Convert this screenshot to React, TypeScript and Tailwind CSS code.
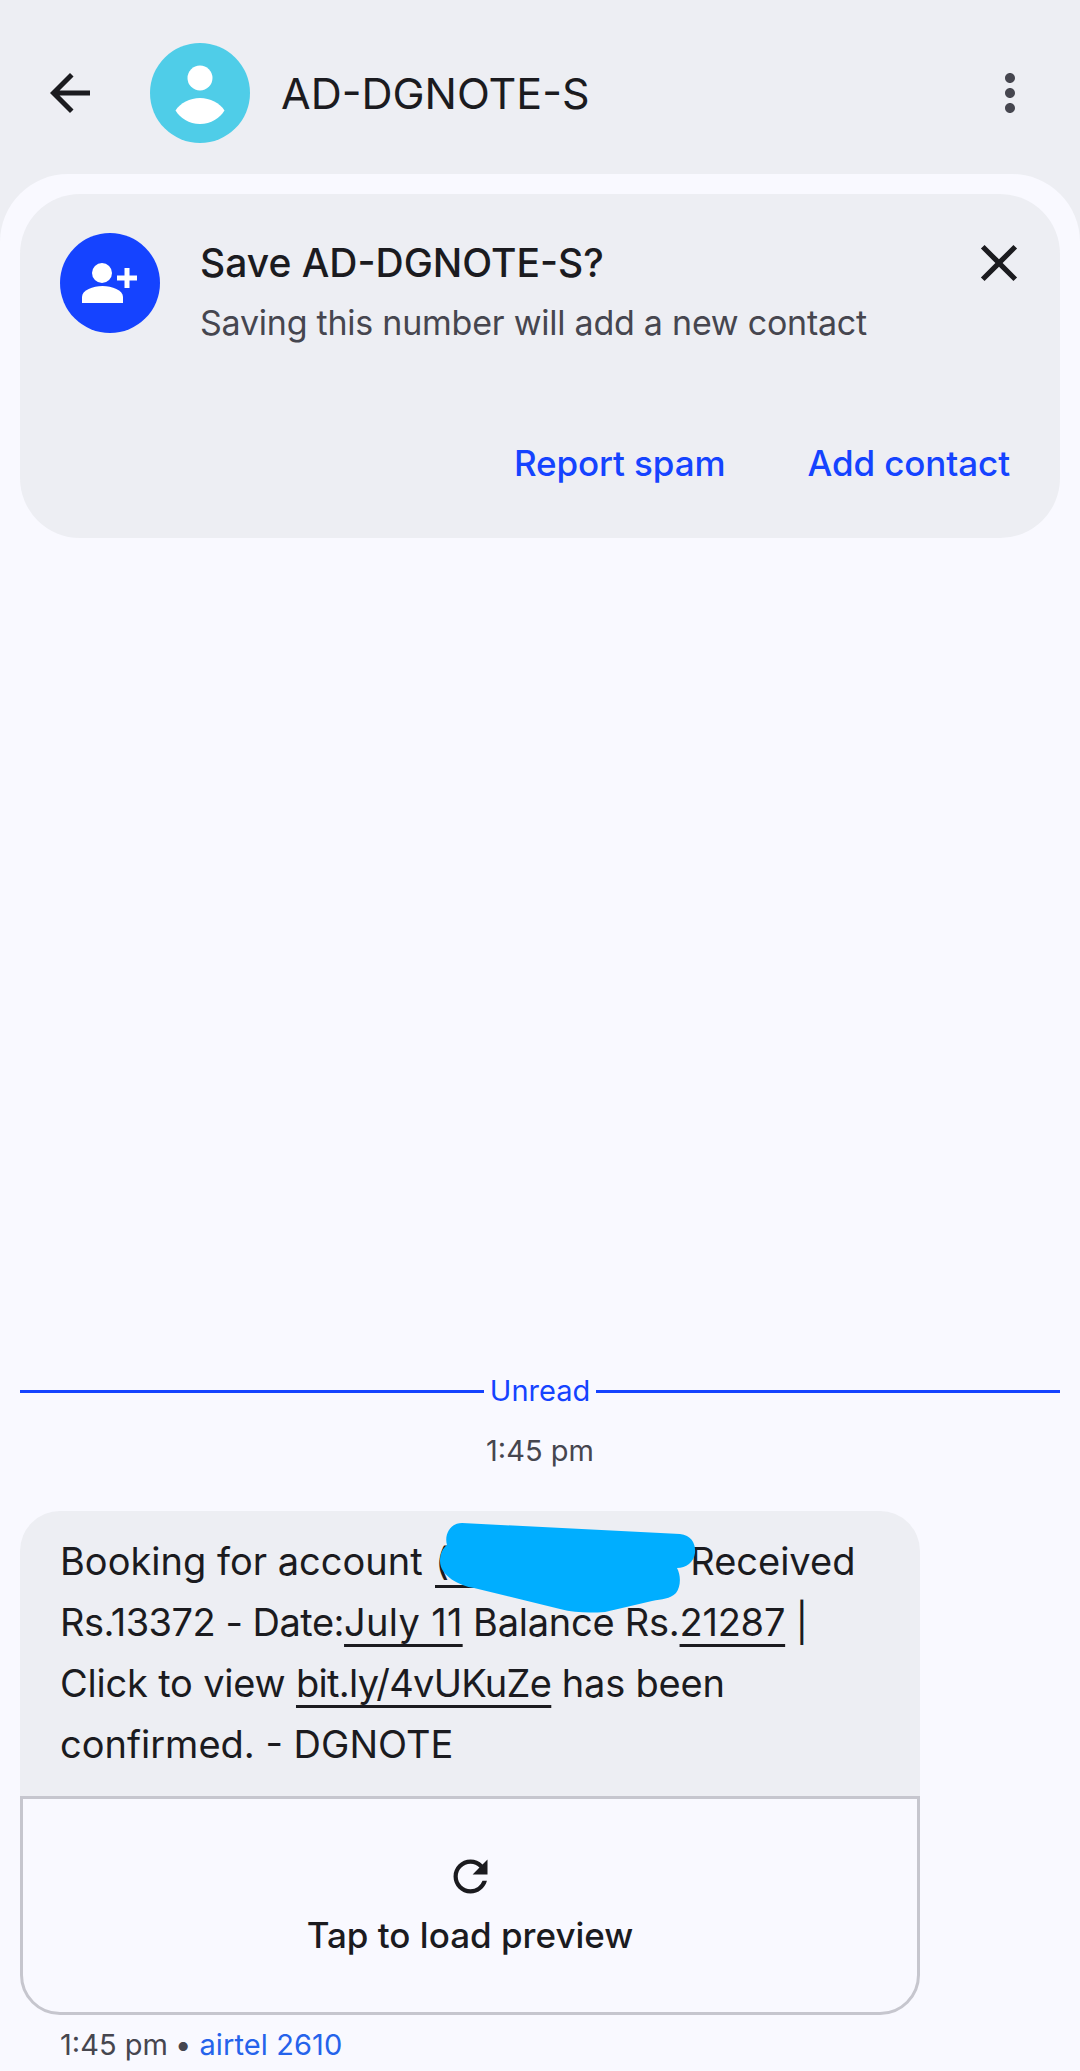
import { MdArrowBack, MdClose, MdMoreVert, MdRefresh } from 'react-icons/md';

function AvatarIcon() {
  return (
    <svg viewBox="0 0 100 100" className="w-[100px] h-[100px] shrink-0">
      <circle cx="50" cy="50" r="50" fill="#4fcde8" />
      <circle cx="50" cy="35" r="12.5" fill="#fff" />
      <path d="M25.5 67.5C30 60 40 55 50 55s20 5 24.5 12.5C70 75 61 81 50 81s-20-6-24.500-13.500z" fill="#fff" />
    </svg>
  );
}

function AddContactIcon() {
  return (
    <svg viewBox="0 0 100 100" className="w-[100px] h-[100px] shrink-0">
      <circle cx="50" cy="50" r="50" fill="#1543ff" />
      <circle cx="42" cy="40" r="10" fill="#fff" />
      <path d="M22 70v-6c0-7 11-11 20.500-11S63 57 63 64v6z" fill="#fff" />
      <path d="M57 42.500h7.500V35h5v7.500H77v5h-7.500V55h-5v-7.500H57z" fill="#fff" />
    </svg>
  );
}

function ScribbleMark() {
  return (
    <svg viewBox="0 0 270 100" className="absolute left-[410px] top-[10px] w-[270px] h-[100px]">
      <path
        d="M32 2 L250 13 C262 14 266 24 265 32 C264 41 256 47 247 47 C251 54 251 66 246 72 C240 78 232 78 222 80 L175 91 C160 92 145 92 130 88 L44 67 C30 65 10 55 10 40 C10 32 13 27 17 24 C14 14 20 2 32 2 Z"
        fill="#00aeff"
      />
    </svg>
  );
}

export default function App() {
  return (
    <div className="w-[1080px] h-[2071px] bg-[#edeef3] flex flex-col overflow-hidden font-['Inter','Liberation_Sans',sans-serif] text-[#1b1b1f]">
      <header className="h-[174px] shrink-0 flex items-start pt-[43px] pl-10 pr-10">
        <div className="h-[100px] flex items-center">
          <MdArrowBack size={60} />
        </div>
        <div className="ml-[50px]">
          <AvatarIcon />
        </div>
        <div className="ml-[31px] h-[100px] flex items-center text-[43px] tracking-[0px]">AD-DGNOTE-S</div>
        <div className="ml-auto h-[100px] flex items-center text-[#46464f]">
          <MdMoreVert size={60} />
        </div>
      </header>

      <main className="flex-1 bg-[#f9f9ff] rounded-t-[68px] px-5 pt-5 flex flex-col">
        <section className="bg-[#edeef3] rounded-[60px] h-[344px] pl-10 pr-10 pt-[39px] flex flex-col">
          <div className="flex items-start">
            <AddContactIcon />
            <div className="ml-10 flex-1">
              <div className="text-[39px] leading-[60px] font-medium tracking-[0px]">Save AD-DGNOTE-S?</div>
              <div className="text-[34px] leading-[60px] text-[#46464f] tracking-[-0.24px]">Saving this number will add a new contact</div>
            </div>
            <MdClose size={62} className="-mr-[10px] -mt-[1px]" />
          </div>
          <div className="mt-auto mb-[50px] flex justify-end gap-[82px] text-[#1543ff] text-[35px] font-medium leading-[50px] tracking-[-0.1px] pr-[10px]">
            <span>Report spam</span>
            <span>Add contact</span>
          </div>
        </section>

        <div className="mt-auto pb-[6px]">
          <div className="flex items-center gap-[6px] h-[40px]">
            <div className="flex-1 h-[3px] bg-[#1543ff]" />
            <span className="text-[#1543ff] text-[29px] leading-[40px]">Unread</span>
            <div className="flex-1 h-[3px] bg-[#1543ff]" />
          </div>
          <div className="mt-[20px] text-center text-[29px] leading-[40px] text-[#46464f]">1:45 pm</div>

          <div className="relative w-[900px] mt-[40px]">
            <div className="bg-[#edeef3] rounded-t-[40px] h-[285px] pl-10 pr-5 pt-5 text-[38px] leading-[61px]">
              <div className="tracking-[0px]">
                Booking for account{' '}
                <span className="inline-block w-[243px] ml-[2px] mr-[12px] border-b-[3px] border-[#1b1b1f] leading-[48px]">(</span>
                Received
              </div>
              <div className="tracking-[-0.25px]">
                <span className="tracking-[-0.5px]">Rs.13372 - Date:</span>
                <span className="tracking-[0.3px] underline decoration-[3px] underline-offset-[8px]">July 11</span> Balance Rs.
                <span className="underline decoration-[3px] underline-offset-[8px]">21287</span>{' '}
                <span>|</span>
              </div>
              <div className="tracking-[-0.2px]">
                Click to view{' '}
                <span className="tracking-[-0.7px] underline decoration-[3px] underline-offset-[8px]">bit.ly/4vUKuZe</span> has been
              </div>
              <div>confirmed. - DGNOTE</div>
            </div>
            <ScribbleMark />
            <div className="h-[219px] border-[3px] border-[#c6c6ce] rounded-b-[40px] flex flex-col items-center pt-[52px]">
              <MdRefresh size={51} />
              <div className="mt-[8px] text-[35px] leading-[50px] font-medium">Tap to load preview</div>
            </div>
          </div>

          <div className="pl-10 mt-[10px] text-[29px] leading-[40px] text-[#46464f]">
            1:45 pm <span className="ml-[-1px]">•</span> <span className="text-[#2563eb] tracking-[0.1px]">airtel 2610</span>
          </div>
        </div>
      </main>
    </div>
  );
}
